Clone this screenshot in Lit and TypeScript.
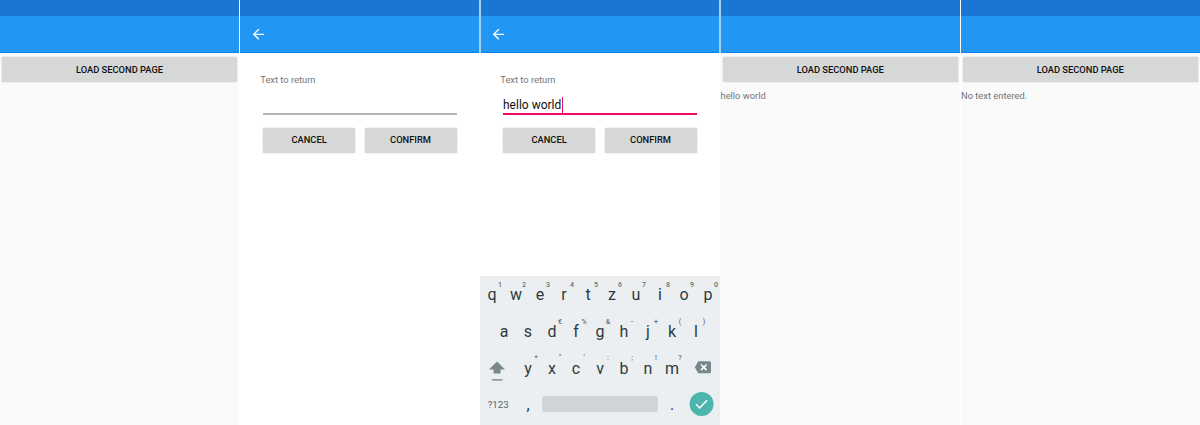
import { LitElement, html, css, nothing } from "lit";
import { customElement, property } from "lit/decorators.js";

@customElement("phone-keyboard")
class PhoneKeyboard extends LitElement {
  static styles = css`
    :host { display: block; box-sizing: border-box; height: 149px; background: #eceff1; color: #37474f; }
    .row { display: flex; height: 36.5px; }
    .row.mid { padding-left: 12px; }
    .key { position: relative; box-sizing: border-box; padding: 3px 0 0; width: 24px; height: 36.5px; flex: none; display: flex; align-items: center; justify-content: center; font-size: 16px; line-height: 20px; color: #2c3b42; }
    .row.top .key { padding-top: 2px; }
    .hint { position: absolute; left: 17px; top: 5px; width: 6px; font-size: 7px; line-height: 9px; color: #607078; font-weight: 500; display: flex; justify-content: center; }
    .wide { width: 36px; flex: none; display: flex; align-items: center; justify-content: center; }
    .sym { font-size: 9.7px; color: #56666e; padding: 1px 0 0 0.5px; box-sizing: border-box; }
    .space { width: 116px; height: 16px; border-radius: 2.5px; background: #cfd4d6; margin: 10.5px 2px 0; flex: none; }
    svg { display: block; }
  `;
  keys(letters: string, hints: string[]) {
    return [...letters].map((c, i) => html`<div class="key">${c}<span class="hint">${hints[i]}</span></div>`);
  }
  render() {
    return html`
      <div class="row top">${this.keys("qwertzuiop", [..."1234567890"])}</div>
      <div class="row mid">${this.keys("asdfghjkl", ["", "", "€", "%", "&", "-", "+", "(", ")"])}</div>
      <div class="row">
        <div class="wide"><svg width="36" height="36" viewBox="0 0 36 36"><path d="M17 12.500l8 8h-4.500v4h-7v-4H9z" fill="#78868d"/><path d="M12 30h10.500v1.700H12z" fill="#8e999e"/></svg></div>
        ${this.keys("yxcvbnm", ["*", "\"", "'", ":", ";", "!", "?"])}
        <div class="wide"><svg width="36" height="36" viewBox="0 0 36 36"><path d="M14.300 12.300H25.500a1.500 1.500 0 0 1 1.500 1.500v9a1.500 1.500 0 0 1-1.500 1.500H14.300L10.800 18.300z" fill="#78868d"/><path d="M17 15.500l5.600 5.600m0-5.600L17 21.100" stroke="#fff" stroke-width="1.600"/></svg></div>
      </div>
      <div class="row">
        <div class="wide sym">?123</div>
        <div class="key">,</div>
        <div class="space"></div>
        <div class="key">.</div>
        <div class="wide"><svg width="36" height="36" viewBox="0 0 36 36"><circle cx="17.600" cy="18" r="12" fill="#4db6ac"/><path d="M12 18.300l3.700 3.700 7.300-7.800" fill="none" stroke="#fff" stroke-width="1.400"/></svg></div>
      </div>`;
  }
}

@customElement("phone-screen")
class PhoneScreen extends LitElement {
  @property() kind = "home";
  @property() text = "";
  @property() edges = "";
  static styles = css`
    :host { display: block; height: 425px; }
    .screen { box-sizing: border-box; height: 425px; display: flex; flex-direction: column; background: #fff; }
    .home { background: #fafafa; }
    .head { box-sizing: border-box; height: 53px; flex: none; border: 0 solid #a2d0f9; background: linear-gradient(#1976d2 16px, #2196f3 16px 52px, #0583ee 52px); }
    .head.edge-l { border-left-width: 1px; }
    .head.edge-r { border-right-width: 1px; }
    .screen.gap-r { border-right: 1px solid #fff; }
    .screen.gap-l { border-left: 1px solid #fff; }
    .bar { display: flex; height: 36px; padding-top: 16px; align-items: center; }
    .back { margin-left: 12px; display: block; }
    .edge-l .back { margin-left: 11px; }
    .btn { box-sizing: border-box; height: 25px; border-radius: 1.5px; background: #d6d7d7; box-shadow: 0 0 1.5px rgba(0,0,0,.28); color: #111; font-size: 9.33px; font-weight: 500; line-height: 25px; text-align: center; }
    .load { margin: 4px 2px 0; }
    .edge-load { margin: 4px 2px 0 3px; }
    .edge-load, .gap-l .load { text-indent: -0.5px; }
    .result { margin: 8px 0 0 0.5px; font-size: 9.33px; line-height: 12px; color: #737373; white-space: nowrap; }
    .gap-l .result { margin-left: 0; }
    .form { padding: 21px 23px 0; }
    .label { margin-left: -2.7px; font-size: 9.33px; line-height: 12px; color: #757575; }
    .field { display: flex; align-items: center; box-sizing: border-box; height: 29px; border-bottom: 2px solid #b5b2b4; font-size: 12px; color: #111; }
    .field.on { border-bottom: 2px solid #f50a63; }
    .caret { width: 1px; height: 16px; background: #f50a63; flex: none; margin-left: 0.4px; }
    .value { display: flex; align-items: center; padding-top: 10px; }
    .pair { display: grid; grid-template-columns: 92.5px 92.5px; justify-content: space-between; margin: 13px -0.2px 0; }
    .pair .btn { line-height: 23px; }
    .pair .btn + .btn { text-indent: -0.8px; }
    .keyboard { margin-top: auto; }
  `;
  render() {
    const home = this.kind === "home";
    return html`<div class="screen ${this.kind} ${this.edges}">
      <div class="head ${this.edges}"><div class="bar">${home ? nothing : html`
        <svg class="back" width="14" height="14" viewBox="0 0 14 14"><path d="M12.200 7.300H1.700M6.800 2.300L1.700 7.300l5.100 5" fill="none" stroke="#fff" stroke-width="1.300"/></svg>`}</div></div>
      ${home ? html`<div class="btn ${this.edges === "edge-l" ? "edge-load" : "load"}">LOAD SECOND PAGE</div>
        ${this.text ? html`<div class="result">${this.text}</div>` : nothing}`
      : html`<div class="form">
          <div class="label">Text to return</div>
          <div class="field ${this.text ? "on" : ""}">${this.text ? html`<div class="value"><span>${this.text}</span><span class="caret"></span></div>` : nothing}</div>
          <div class="pair"><div class="btn">CANCEL</div><div class="btn">CONFIRM</div></div>
        </div>
        ${this.text ? html`<phone-keyboard class="keyboard"></phone-keyboard>` : nothing}`}
    </div>`;
  }
}

@customElement("app-root")
class AppRoot extends LitElement {
  static styles = css`
    :host { display: grid; grid-template-columns: repeat(5, 240px); width: 1200px; height: 425px; overflow: hidden; background: #fff; font-family: Roboto, sans-serif; }
  `;
  render() {
    return html`
      <phone-screen kind="home" edges="gap-r"></phone-screen>
      <phone-screen kind="entry" edges="edge-r"></phone-screen>
      <phone-screen kind="entry" edges="edge-l edge-r" text="hello world"></phone-screen>
      <phone-screen kind="home" edges="edge-l" text="hello world"></phone-screen>
      <phone-screen kind="home" edges="gap-l" text="No text entered."></phone-screen>`;
  }
}
